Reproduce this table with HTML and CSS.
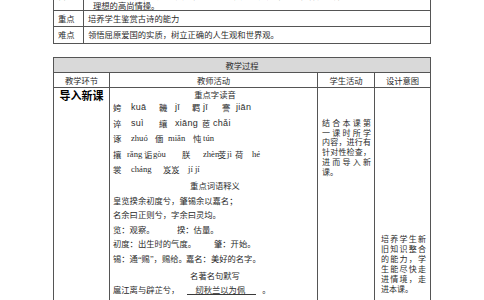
FILE: index.html
```html
<!DOCTYPE html>
<html lang="zh">
<head>
<meta charset="utf-8">
<title>教学过程</title>
<link rel="stylesheet" href="styles.css">
</head>
<body>
<div class="doc">
  <div class="grid t1">
    <div class="c k first">目标</div>
    <div class="c v first">
      <div class="ln">3．通过诵读，体会屈原热爱祖国、坚持真理、九死不悔的精神，培养学生追求美好</div>
      <div class="ln hang">理想的高尚情操。</div>
    </div>
    <div class="c k r2">重点</div>
    <div class="c v r2">培养学生鉴赏古诗的能力</div>
    <div class="c k r3">难点</div>
    <div class="c v r3">领悟屈原爱国的实质，树立正确的人生观和世界观。</div>
  </div>

  <div class="grid t2">
    <div class="c head">教学过程</div>
    <div class="c th">教学环节</div>
    <div class="c th">教师活动</div>
    <div class="c th">学生活动</div>
    <div class="c th">设计意图</div>

    <div class="c sec">导入新课</div>
    <div class="c teach">
      <div class="h1">重点字读音</div>
      <div class="py py1"><span>姱</span><span class="sa">kuā</span><span>鞿</span><span class="sa">jī</span><span>羁</span><span class="sa">jī</span><span>謇</span><span class="sa">jiān</span></div>
      <div class="py py2"><span>谇</span><span class="sa">suì</span><span>纕</span><span class="sa">xiāng</span><span>茝</span><span class="sa">chǎi</span></div>
      <div class="py py3"><span>诼</span><span class="se">zhuó</span><span>偭</span><span class="se">miǎn</span><span>忳</span><span class="se">tún</span></div>
      <div class="py py4"><span>攘</span><span class="se">rǎng</span><span>诟</span><span class="se">gòu</span><span>朕</span><span class="se">zhèn</span><span>芰</span><span class="se">jì</span><span>荷</span><span class="se">hé</span></div>
      <div class="py py5"><span>裳</span><span class="se">cháng</span><span>岌岌</span><span class="se">jí jí</span></div>
      <div class="h2">重点词语释义</div>
      <div class="tx">皇览揆余初度兮，肇锡余以嘉名；</div>
      <div class="tx">名余曰正则兮，字余曰灵均。</div>
      <div class="tx pair pr1"><span>览：观察。</span><span>揆：估量。</span></div>
      <div class="tx pair pr2"><span>初度：出生时的气度。</span><span>肇：开始。</span></div>
      <div class="tx pair pr3"><span>锡：通<span class="q">“</span>赐<span class="q">”</span>，赐给。</span><span>嘉名：美好的名字。</span></div>
      <div class="h2">名著名句默写</div>
      <div class="tx">扈江离与辟芷兮，<span class="blank">纫秋兰以为佩</span><span class="dot">。</span></div>
      <div class="tx">乘骐骥以驰骋兮，<span class="blank">来吾道夫先路</span><span class="dot">。</span></div>
    </div>
    <div class="c stu">
      <div class="jl">结合本课第</div>
      <div class="jl">一课时所学</div>
      <div class="jl">内容，进行有</div>
      <div class="jl">针对性检查，</div>
      <div class="jl">进而导入新</div>
      <div>课。</div>
    </div>
    <div class="c design">
      <div class="jl">培养学生新</div>
      <div class="jl">旧知识整合</div>
      <div class="jl">的能力，学</div>
      <div class="jl">生能尽快走</div>
      <div class="jl">进情境，走</div>
      <div>进本课。</div>
    </div>
  </div>
</div>
</body>
</html>
```

FILE: styles.css
```css
html, body {
  margin: 0;
  padding: 0;
  background: #fff;
  overflow: hidden;
}

body {
  font-family: "Noto Sans CJK SC", sans-serif;
  font-size: 8.3px;
  color: #2b2b2b;
}

.doc {
  width: 378px;
  margin: -12px 0 0 53px;
}

.grid {
  display: grid;
  gap: 1px;
  padding: 1px;
  background: #555;
}

.c {
  background: #fff;
  overflow: hidden;
}

/* top table */
.t1 {
  grid-template-columns: 29px 1fr;
  grid-template-rows: 21px 15px 16px;
}

.t1 .k,
.t1 .v {
  padding-left: 4px;
}

.first {
  padding-top: 1px;
  line-height: 10px;
  white-space: nowrap;
}

.hang {
  padding-left: 5px;
}

.r2 {
  line-height: 14px;
}

.r3 {
  line-height: 15px;
}

/* process table */
.t2 {
  margin-top: 13px;
  grid-template-columns: 55px 207px 56px 55px;
  grid-template-rows: 14px 14px 240px;
}

.head {
  grid-column: 1 / -1;
  background: #d9d9d9;
  text-align: center;
  line-height: 14px;
}

.th {
  text-align: center;
  line-height: 14px;
}

.sec {
  text-align: center;
  font-size: 11px;
  font-weight: 700;
  color: #000;
  line-height: 14px;
}

.teach {
  padding-left: 3px;
}

.h1 {
  text-align: center;
  line-height: 12px;
}

.py {
  display: grid;
  grid-auto-flow: column;
  justify-content: start;
  line-height: 15.6px;
  white-space: nowrap;
}

.py1 { grid-template-columns: 18px 28px 16px 17px 11px 19px 14px auto; }
.py2 { grid-template-columns: 18px 28px 16px 27px 11px auto; }
.py3 { grid-template-columns: 18px 24px 13px 25px 10px auto; }
.py4 { grid-template-columns: 14px 17px 9px 29px 21px 15px 9px 8px 17px auto; }
.py5 { grid-template-columns: 18px 32px 25px auto; }

.sa {
  font-family: "Liberation Sans", Arial, sans-serif;
  font-size: 9px;
  letter-spacing: 0.3px;
}

.se {
  font-family: "Liberation Serif", "Times New Roman", serif;
  font-size: 8.6px;
}

.h2 {
  text-align: center;
  line-height: 14.6px;
}

.tx {
  line-height: 14.6px;
  white-space: nowrap;
}

.pair {
  display: grid;
  grid-auto-flow: column;
  justify-content: start;
}

.pr1 { grid-template-columns: 64px auto; }
.pr2 { grid-template-columns: 101px auto; }
.pr3 { grid-template-columns: 73px auto; }

.q {
  font-family: "Liberation Serif", "Times New Roman", serif;
}

.blank {
  display: inline-block;
  margin-left: 8px;
  padding: 0 11px 0 8px;
  line-height: 10px;
  border-bottom: 1px solid #3a3a3a;
}

.dot {
  margin-left: 6px;
}

.stu {
  padding: 30px 3px 0 4px;
  font-size: 8px;
  line-height: 9.7px;
}

.design {
  padding: 146px 4px 0 6px;
  font-size: 8px;
  line-height: 10px;
}

.jl {
  text-align: justify;
  text-align-last: justify;
}
```
